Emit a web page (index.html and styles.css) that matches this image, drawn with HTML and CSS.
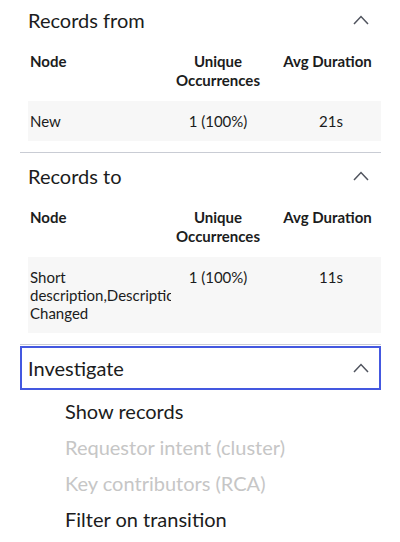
FILE: index.html
```html
<!DOCTYPE html>
<html lang="en">
<head>
<meta charset="utf-8">
<title>Transition details</title>
<link rel="stylesheet" href="styles.css">
</head>
<body>
<div class="panel">
  <section class="sec sec-div">
    <div class="sec-head">
      <h2 class="sec-title">Records from</h2>
      <svg class="chev" width="16" height="10" viewBox="0 0 16 10"><polyline points="1,9 8,1.5 15,9"/></svg>
    </div>
    <div class="tbl">
      <div class="tr th">
        <div class="c1">Node</div>
        <div class="c2">Unique Occurrences</div>
        <div class="c3">Avg Duration</div>
      </div>
      <div class="tr td">
        <div class="c1"><div class="clip">New</div></div>
        <div class="c2">1 (100%)</div>
        <div class="c3">21s</div>
      </div>
    </div>
  </section>
  <section class="sec sec-div">
    <div class="sec-head">
      <h2 class="sec-title">Records to</h2>
      <svg class="chev" width="16" height="10" viewBox="0 0 16 10"><polyline points="1,9 8,1.5 15,9"/></svg>
    </div>
    <div class="tbl">
      <div class="tr th">
        <div class="c1">Node</div>
        <div class="c2">Unique Occurrences</div>
        <div class="c3">Avg Duration</div>
      </div>
      <div class="tr td">
        <div class="c1"><div class="clip">Short description,Description Changed</div></div>
        <div class="c2">1 (100%)</div>
        <div class="c3">11s</div>
      </div>
    </div>
  </section>
  <section class="sec">
    <div class="sec-head focused">
      <h2 class="sec-title">Investigate</h2>
      <svg class="chev" width="16" height="10" viewBox="0 0 16 10"><polyline points="1,9 8,1.5 15,9"/></svg>
    </div>
    <ul class="menu">
      <li class="item">Show records</li>
      <li class="item disabled">Requestor intent (cluster)</li>
      <li class="item disabled">Key contributors (RCA)</li>
      <li class="item">Filter on transition</li>
    </ul>
  </section>
</div>
</body>
</html>
```

FILE: styles.css
```css
html, body {
  margin: 0;
  padding: 0;
  background: #ffffff;
}
body {
  font-family: Lato, "Open Sans", "Liberation Sans", sans-serif;
  color: #1b1c20;
  overflow: hidden;
}
.panel {
  margin: -3px 0 0 20px;
  width: 361px;
}
.sec-div {
  padding-bottom: 11px;
  border-bottom: 1px solid #c9ccd4;
}
.sec-head {
  margin-top: 1px;
  height: 44px;
  display: flex;
  align-items: center;
  justify-content: space-between;
  padding: 0 12px 0 8px;
  box-sizing: border-box;
}
.sec-head.focused {
  outline: 2px solid #4458e0;
  outline-offset: -2px;
}
.sec-title {
  margin: 0;
  font-size: 20px;
  line-height: 24px;
  font-weight: 400;
}
.chev {
  display: block;
  fill: none;
  stroke: #50545e;
  stroke-width: 1.5;
}
.tbl {
  padding-left: 8px;
}
.tr {
  display: grid;
  grid-template-columns: 130px 120px 1fr;
  align-items: start;
  font-size: 15px;
}
.th {
  font-weight: 700;
  line-height: 19px;
  padding: 10px 0 11px;
}
.td {
  background: #f7f7f7;
  line-height: 18px;
  padding: 11px 0;
}
.c1 {
  padding-left: 2px;
}
.c2 {
  text-align: center;
}
.th .c3 {
  text-align: center;
  padding-right: 4px;
}
.td .c3 {
  text-align: center;
  padding-left: 3px;
}
.clip {
  width: 141px;
  overflow: hidden;
}
.menu {
  list-style: none;
  margin: 0;
  padding: 3px 0 0 45px;
}
.item {
  font-size: 20px;
  line-height: 36px;
  color: #1b1c20;
}
.item.disabled {
  color: #c6c6c6;
}
```
